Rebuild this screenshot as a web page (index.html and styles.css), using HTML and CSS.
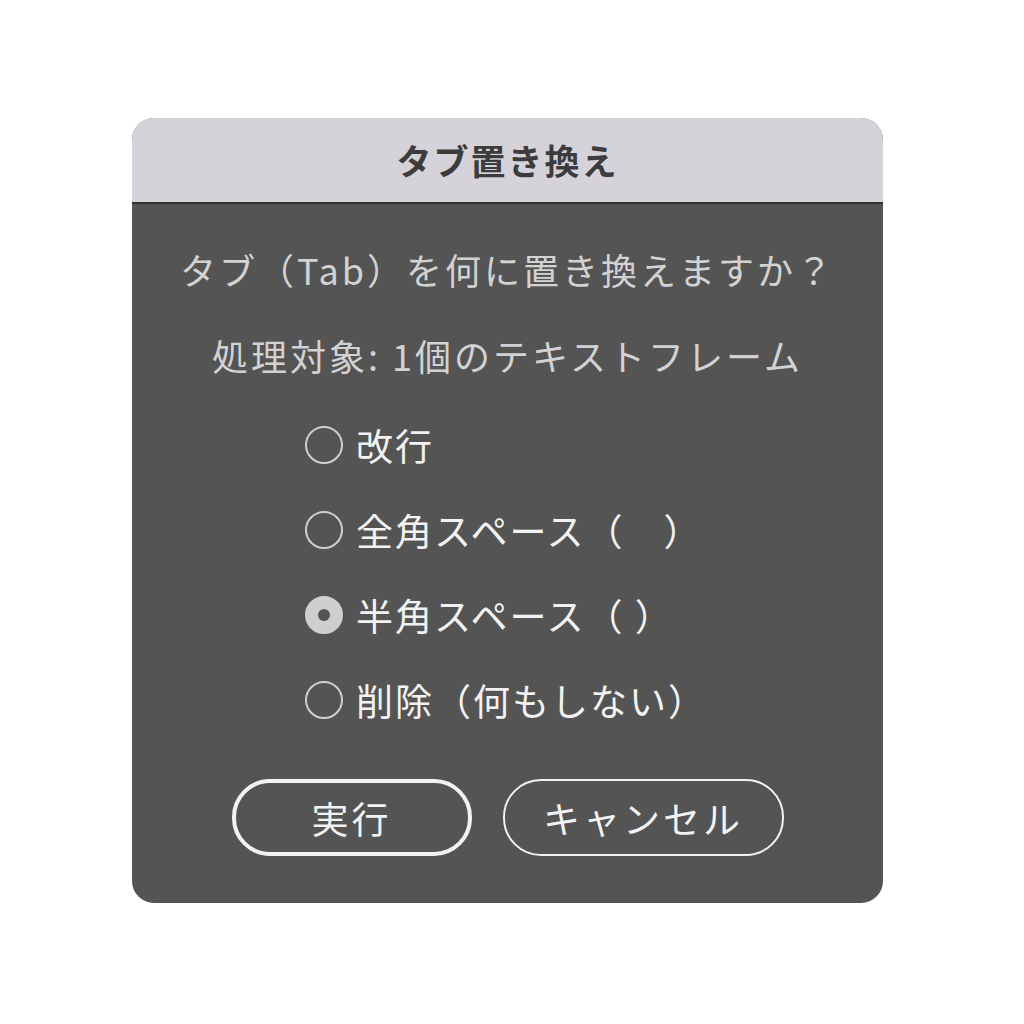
FILE: index.html
```html
<!DOCTYPE html>
<html lang="ja">
<head>
    <meta charset="UTF-8">
    <meta name="viewport" content="width=device-width, initial-scale=1.0">
    <title>タブ置き換え</title>
    <link rel="stylesheet" href="styles.css">
</head>
<body>

<div class="dialog">
    <div class="titlebar">タブ置き換え</div>

    <div class="content">
        <p class="message">タブ（Tab）を何に置き換えますか？</p>
        <p class="message target">処理対象: 1個のテキストフレーム</p>

        <div class="options">
            <label class="option"><span class="radio"></span>改行</label>
            <label class="option"><span class="radio"></span>全角スペース（　）</label>
            <label class="option"><span class="radio checked"></span>半角スペース（ ）</label>
            <label class="option"><span class="radio"></span>削除（何もしない）</label>
        </div>

        <div class="buttons">
            <button class="btn default">実行</button>
            <button class="btn">キャンセル</button>
        </div>
    </div>
</div>

</body>
</html>
```

FILE: styles.css
```css
body {
    margin: 0;
    background-color: #fff;
    font-family: "Noto Sans CJK JP", "Noto Sans", sans-serif;
}
.dialog {
    width: 751px;
    margin: 118px 0 0 132px;
    background-color: #545454;
    border-radius: 22px;
    overflow: hidden;
}
.titlebar {
    height: 84px;
    line-height: 84px;
    background-color: #d6d2d9;
    border-bottom: 2px solid #333;
    text-align: center;
    font-size: 35px;
    font-weight: bold;
    letter-spacing: 2px;
    color: #3c3c3c;
}
.content {
    padding: 22px 0 47px;
}
.message {
    margin: 0;
    text-align: center;
    font-size: 36px;
    letter-spacing: 3px;
    line-height: 86px;
    color: #d2d2d2;
}
.options {
    margin: 4px 0 0 173px;
}
.option {
    display: flex;
    align-items: center;
    gap: 13px;
    height: 85px;
    font-size: 37px;
    letter-spacing: 2px;
    color: #f2f2f2;
}
.radio {
    width: 34px;
    height: 34px;
    border: 2px solid #cfcfcf;
    border-radius: 50%;
    box-sizing: content-box;
    flex-shrink: 0;
}
.radio.checked {
    background-color: #cfcfcf;
    display: flex;
    align-items: center;
    justify-content: center;
}
.radio.checked::after {
    content: "";
    width: 12px;
    height: 12px;
    border-radius: 50%;
    background-color: #545454;
}
.buttons {
    display: flex;
    justify-content: center;
    gap: 31px;
    margin-top: 37px;
}
.btn {
    height: 77px;
    background: none;
    border: 2px solid #f2f2f2;
    border-radius: 38px;
    color: #f2f2f2;
    font-family: inherit;
    font-size: 37px;
    letter-spacing: 3px;
    width: 281px;
    cursor: pointer;
}
.btn.default {
    width: 240px;
    border-width: 4px;
}
```
